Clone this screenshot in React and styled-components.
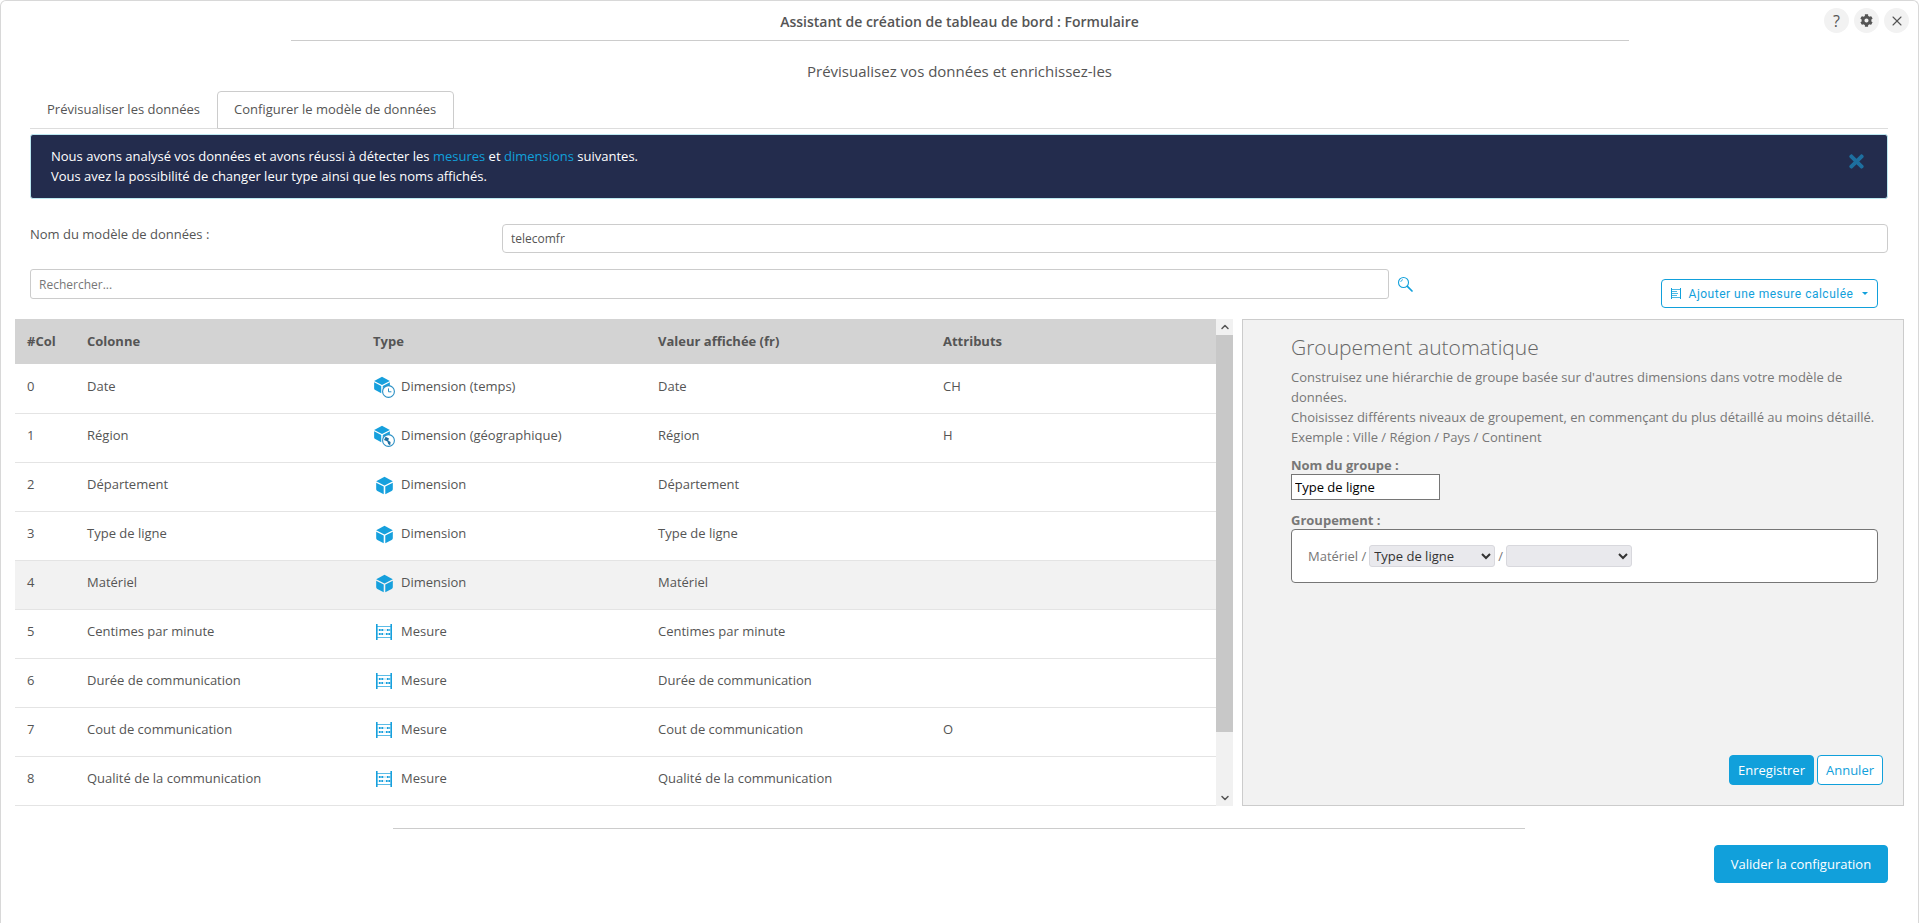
import React from "react";
import styled, { createGlobalStyle } from "styled-components";
import { FaCog, FaTimes } from "react-icons/fa";
import { X, ChevronUp, ChevronDown } from "lucide-react";

const Global = createGlobalStyle`
  html, body { margin: 0; padding: 0; background: #fff; }
  body { font-family: "Open Sans", "Liberation Sans", sans-serif; font-size: 13px; color: #555; }
  * { box-sizing: border-box; }
`;

const Modal = styled.div`
  position: relative;
  width: 1919px;
  height: 923px;
  overflow: hidden;
  background: #fff;
  border: 1px solid #d8d8d8;
  border-bottom: 0;
  border-radius: 6px 6px 0 0;
`;
const Title = styled.h1`
  margin: 0;
  height: 39px;
  font-size: 14px;
  font-weight: 600;
  line-height: 41px;
  text-align: center;
  color: #555;
`;
const Rule = styled.hr`
  margin: 0 auto;
  border: 0;
  height: 1px;
  background: #ccc;
  width: ${(p) => p.$width}px;
`;
const Subtitle = styled.h2`
  margin: 0;
  height: 50px;
  font-size: 15px;
  font-weight: 400;
  line-height: 60px;
  text-align: center;
  color: #555;
`;
const WindowActions = styled.div`
  position: absolute;
  top: 7px;
  right: 9px;
  display: flex;
  gap: 5px;
`;
const RoundButton = styled.button`
  width: 25px;
  height: 25px;
  padding: 0;
  border: 0;
  border-radius: 50%;
  background: #f2f2f2;
  color: #555;
  font: 400 16px "Open Sans", sans-serif;
  display: flex;
  align-items: center;
  justify-content: center;
`;
const Content = styled.div`
  padding: 0 30px 0 29px;
`;
const Tabs = styled.nav`
  display: flex;
  height: 38px;
  border-bottom: 1px solid #ddd;
`;
const Tab = styled.div`
  padding: 0 ${(p) => (p.$active ? 17 : 16)}px 0 16px;
  height: 38px;
  line-height: 35px;
  font-size: 13px;
  color: #555;
  background: ${(p) => (p.$active ? "#fff" : "transparent")};
  border: 1px solid ${(p) => (p.$active ? "#ccc" : "transparent")};
  border-bottom: ${(p) => (p.$active ? "1px solid #ccc" : "0")};
  border-radius: 4px 4px 0 0;
`;
const Alert = styled.div`
  position: relative;
  margin-top: 5px;
  height: 65px;
  padding: 11px 20px;
  background: #232c4d;
  border: 1px solid #bce8f1;
  border-radius: 3px;
  color: #fff;
  font-size: 13px;
  line-height: 20px;
`;
const Highlight = styled.span`
  color: #11a0db;
`;
const AlertClose = styled.span`
  position: absolute;
  top: 16px;
  right: 20px;
  color: #1d6f9f;
  display: flex;
`;
const NameRow = styled.div`
  display: grid;
  grid-template-columns: 472px 1fr;
  margin-top: 25px;
`;
const Label = styled.label`
  font-size: 13px;
  line-height: 20px;
  color: #555;
`;
const TextInput = styled.input`
  display: block;
  width: ${(p) => p.$width || "100%"};
  height: ${(p) => p.$height}px;
  padding: 0 8px;
  border: 1px solid #ccc;
  border-radius: ${(p) => p.$radius}px;
  font: 400 12px "Open Sans", sans-serif;
  color: #555;
  background: #fff;
  outline: none;
  &::placeholder { color: #777; opacity: 1; }
`;
const SearchRow = styled.div`
  display: flex;
  align-items: flex-start;
  height: 50px;
  margin-top: 16px;
`;
const SearchButton = styled.span`
  margin: 7px 0 0 8px;
  display: flex;
`;
const AddButton = styled.button`
  margin: 10px 10px 0 auto;
  width: 217px;
  height: 29px;
  padding: 0;
  display: flex;
  align-items: center;
  justify-content: center;
  gap: 8px;
  background: #fff;
  border: 1px solid #11a0db;
  border-radius: 4px;
  color: #11a0db;
  font: 400 12px "Roboto", "Open Sans", sans-serif;
  letter-spacing: 0.5px;
`;
const Caret = styled.span`
  width: 0;
  height: 0;
  margin-left: 1px;
  border-left: 3px solid transparent;
  border-right: 3px solid transparent;
  border-top: 3px solid #11a0db;
`;
const Main = styled.div`
  display: flex;
  margin: 0 -16px 0 -15px;
  height: 487px;
`;
const TableWrap = styled.div`
  width: 1201px;
  flex: none;
`;
const Table = styled.table`
  width: 100%;
  border-collapse: collapse;
  table-layout: fixed;
`;
const HeadCell = styled.th`
  height: 45px;
  padding: 0 12px 2px;
  background: #d3d3d3;
  text-align: left;
  font-size: 13px;
  font-weight: 700;
  color: #555;
  width: ${(p) => p.$width}px;
`;
const Row = styled.tr`
  background: ${(p) => (p.$hover ? "#f2f2f2" : "#fff")};
  border-bottom: 1px solid #e4e4e4;
`;
const Cell = styled.td`
  height: 49px;
  padding: 0 12px 5px;
  font-size: 13px;
  color: #555;
`;
const TypeCell = styled.div`
  display: flex;
  align-items: center;
  gap: 6px;
`;
const IconSlot = styled.span`
  position: relative;
  width: 22px;
  height: 22px;
  display: flex;
  flex: none;
  align-items: center;
  justify-content: center;
  margin-top: 2px;
`;
const Scrollbar = styled.div`
  width: 17px;
  flex: none;
  display: flex;
  flex-direction: column;
  background: #f1f1f1;
  color: #555;
`;
const ScrollArrow = styled.span`
  height: 16px;
  flex: none;
  display: flex;
  align-items: center;
  justify-content: center;
`;
const ScrollThumb = styled.span`
  height: 397px;
  flex: none;
  background: #c8c8c8;
`;
const ScrollGap = styled.span`
  flex: 1;
`;
const Panel = styled.aside`
  position: relative;
  width: 662px;
  margin-left: 9px;
  padding: 11px 24px 0 48px;
  background: #f2f2f2;
  border: 1px solid #ccc;
  color: #777;
`;
const PanelTitle = styled.h3`
  margin: 0;
  height: 36px;
  font-size: 21px;
  font-weight: 300;
  line-height: 33px;
  color: #666;
`;
const PanelText = styled.p`
  margin: 0;
  font-size: 13px;
  line-height: 20px;
  color: #777;
`;
const FieldLabel = styled.div`
  font-size: 13px;
  font-weight: 700;
  line-height: 18px;
  color: #777;
  margin-top: ${(p) => p.$top}px;
`;
const GroupInput = styled.input`
  display: block;
  width: 149px;
  height: 26px;
  padding: 0 3px;
  border: 1px solid #767676;
  background: #fff;
  color: #000;
  font: 400 13px "Open Sans", sans-serif;
  outline: none;
`;
const GroupBox = styled.div`
  width: 587px;
  height: 54px;
  padding: 0 16px;
  display: flex;
  align-items: center;
  gap: 3px;
  background: #fff;
  border: 1px solid #767676;
  border-radius: 4px;
  font-size: 13px;
  color: #777;
`;
const Select = styled.select`
  width: 126px;
  height: 22px;
  font: 400 13px "Open Sans", sans-serif;
  color: #333;
  background-color: #e9e9ed;
  border: 1px solid #d8d8dd;
  border-radius: 3px;
  padding: 0;
`;
const PanelActions = styled.div`
  position: absolute;
  right: 20px;
  bottom: 20px;
  display: flex;
  gap: 3px;
`;
const Button = styled.button`
  height: ${(p) => p.$height}px;
  width: ${(p) => p.$width}px;
  padding: 0;
  border-radius: 4px;
  border: 1px solid #11a0db;
  background: ${(p) => (p.$outline ? "#fff" : "#11a0db")};
  color: ${(p) => (p.$outline ? "#11a0db" : "#fff")};
  font: 400 13px "Open Sans", sans-serif;
`;
const Footer = styled.div`
  margin-top: 22px;
`;
const FooterActions = styled.div`
  display: flex;
  justify-content: flex-end;
  margin-top: 16px;
`;

const CubeShape = ({ size = 19, x = 0, y = 0 }) => (
  <svg x={x} y={y} width={size} height={size} viewBox="0 0 24 24">
    <path fill="#16a0dd" d="M12 1 22.5 6.6 12 12 1.5 6.6Z" />
    <path fill="#16a0dd" d="M1.5 8.4 11 13.4V23L3 18.8A2.6 2.6 0 0 1 1.5 16.6Z" />
    <path fill="#16a0dd" d="M22.5 8.4 13 13.4V23L21 18.8A2.6 2.6 0 0 0 22.5 16.6Z" />
  </svg>
);
const CubeIcon = () => (
  <svg width="19" height="19" viewBox="0 0 19 19"><CubeShape /></svg>
);
const CubeTimeIcon = () => (
  <svg width="22" height="22" viewBox="0 0 22 22">
    <CubeShape size={18} />
    <circle cx="15.5" cy="15.5" r="5.9" fill="#fff" stroke="#2a8fc4" strokeWidth="1.1" />
    <path d="M15.5 12.4V15.8H18.4" fill="none" stroke="#2a8fc4" strokeWidth="1" />
  </svg>
);
const CubeGeoIcon = () => (
  <svg width="22" height="22" viewBox="0 0 22 22">
    <CubeShape size={18} />
    <circle cx="15.5" cy="15.5" r="5.9" fill="#fff" stroke="#2a8fc4" strokeWidth="1.1" />
    <path d="M12.6 11.8 16 13.4 15.2 15.6 17.6 17 17.2 20.4 15.2 19 14.4 16.6 11 15Z" fill="#1f6f9f" />
  </svg>
);
const AbacusIcon = () => (
  <svg width="16" height="16" viewBox="0 0 16 16" fill="none" stroke="#16a0dd">
    <path strokeWidth="1.6" d="M.8 0V16M15.2 0V16" />
    <path strokeWidth="1" opacity=".7" d="M1 2.5H15M1 13.5H15" />
    <path strokeWidth=".6" opacity=".6" d="M1 6H15M1 10H15" />
    <path strokeWidth="2" strokeDasharray="1.6 .8" d="M3 6H8M3 10H7" />
    <path strokeWidth="2" strokeDasharray="1.6 .8" d="M11 6H14M10 10H14" />
  </svg>
);
const SmallAbacusIcon = () => (
  <svg width="10" height="11" viewBox="0 0 10 11" fill="none" stroke="#11a0db">
    <path strokeWidth="1" d="M.5 0V11M9.5 0V11" />
    <path strokeWidth="1" d="M1 1.5H9M1 5.5H7M1 9.5H9M1 3.5H6M1 7.5H6" opacity=".75" />
  </svg>
);
const SearchIcon = () => (
  <svg width="16" height="16" viewBox="0 0 16 16" fill="none" stroke="#11a0db">
    <circle cx="6.5" cy="6.5" r="5" strokeWidth="1.1" />
    <path d="M10.4 10.4 15 15" strokeWidth="1.7" strokeLinecap="round" />
    <path d="M3.7 6A3 3 0 0 1 6 3.6" strokeWidth=".8" />
  </svg>
);

const typeIcon = {
  time: <CubeTimeIcon />,
  geo: <CubeGeoIcon />,
  dim: <CubeIcon />,
  mes: <AbacusIcon />,
};
const rows = [
  ["Date", "time", "Dimension (temps)", "CH"],
  ["Région", "geo", "Dimension (géographique)", "H"],
  ["Département", "dim", "Dimension", ""],
  ["Type de ligne", "dim", "Dimension", ""],
  ["Matériel", "dim", "Dimension", ""],
  ["Centimes par minute", "mes", "Mesure", ""],
  ["Durée de communication", "mes", "Mesure", ""],
  ["Cout de communication", "mes", "Mesure", "O"],
  ["Qualité de la communication", "mes", "Mesure", ""],
];

export default function App() {
  return (
    <>
      <Global />
      <Modal>
        <Title>Assistant de création de tableau de bord : Formulaire</Title>
        <Rule $width={1338} />
        <WindowActions>
          <RoundButton>?</RoundButton>
          <RoundButton><FaCog size={13} /></RoundButton>
          <RoundButton><X size={16} strokeWidth={1.6} /></RoundButton>
        </WindowActions>
        <Subtitle>Prévisualisez vos données et enrichissez-les</Subtitle>
        <Content>
          <Tabs>
            <Tab>Prévisualiser les données</Tab>
            <Tab $active>Configurer le modèle de données</Tab>
          </Tabs>
          <Alert>
            Nous avons analysé vos données et avons réussi à détecter les <Highlight>mesures</Highlight> et <Highlight>dimensions</Highlight> suivantes.
            <br />
            Vous avez la possibilité de changer leur type ainsi que les noms affichés.
            <AlertClose><FaTimes size={21} /></AlertClose>
          </Alert>
          <NameRow>
            <Label>Nom du modèle de données :</Label>
            <TextInput $height={29} $radius={4} defaultValue="telecomfr" />
          </NameRow>
          <SearchRow>
            <TextInput $width="1359px" $height={30} $radius={3} placeholder="Rechercher..." />
            <SearchButton><SearchIcon /></SearchButton>
            <AddButton>
              <SmallAbacusIcon />
              Ajouter une mesure calculée
              <Caret />
            </AddButton>
          </SearchRow>
          <Main>
            <TableWrap>
              <Table>
                <thead>
                  <tr>
                    <HeadCell $width={60}>#Col</HeadCell>
                    <HeadCell $width={286}>Colonne</HeadCell>
                    <HeadCell $width={285}>Type</HeadCell>
                    <HeadCell $width={285}>Valeur affichée (fr)</HeadCell>
                    <HeadCell $width={285}>Attributs</HeadCell>
                  </tr>
                </thead>
                <tbody>
                  {rows.map(([name, icon, type, attr], i) => (
                    <Row key={name} $hover={i === 4}>
                      <Cell>{i}</Cell>
                      <Cell>{name}</Cell>
                      <Cell>
                        <TypeCell>
                          <IconSlot>{typeIcon[icon]}</IconSlot>
                          {type}
                        </TypeCell>
                      </Cell>
                      <Cell>{name}</Cell>
                      <Cell>{attr}</Cell>
                    </Row>
                  ))}
                </tbody>
              </Table>
            </TableWrap>
            <Scrollbar>
              <ScrollArrow><ChevronUp size={12} strokeWidth={3} /></ScrollArrow>
              <ScrollThumb />
              <ScrollGap />
              <ScrollArrow><ChevronDown size={12} strokeWidth={3} /></ScrollArrow>
            </Scrollbar>
            <Panel>
              <PanelTitle>Groupement automatique</PanelTitle>
              <PanelText>
                Construisez une hiérarchie de groupe basée sur d'autres dimensions dans votre modèle de données.
                <br />
                Choisissez différents niveaux de groupement, en commençant du plus détaillé au moins détaillé.
                <br />
                Exemple : Ville / Région / Pays / Continent
              </PanelText>
              <FieldLabel $top={9}>Nom du groupe :</FieldLabel>
              <GroupInput defaultValue="Type de ligne" />
              <FieldLabel $top={11}>Groupement :</FieldLabel>
              <GroupBox>
                Matériel /
                <Select defaultValue="Type de ligne">
                  <option>Type de ligne</option>
                </Select>
                /
                <Select defaultValue="">
                  <option value=""></option>
                </Select>
              </GroupBox>
              <PanelActions>
                <Button $width={85} $height={30}>Enregistrer</Button>
                <Button $outline $width={66} $height={30}>Annuler</Button>
              </PanelActions>
            </Panel>
          </Main>
          <Footer>
            <Rule $width={1132} />
            <FooterActions>
              <Button $width={174} $height={38}>Valider la configuration</Button>
            </FooterActions>
          </Footer>
        </Content>
      </Modal>
    </>
  );
}
